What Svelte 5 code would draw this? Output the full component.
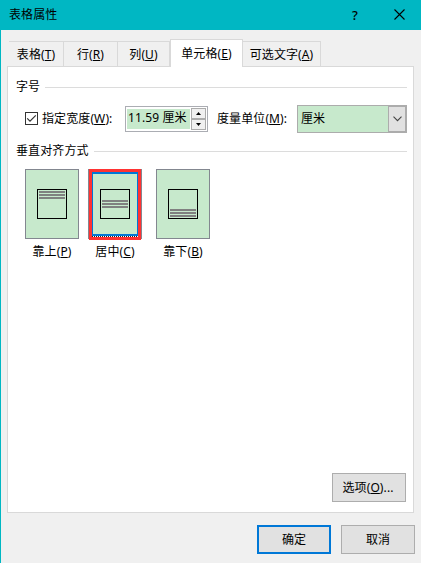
<script>
  const tabs = [
    { label: '表格', key: 'T', width: 55 },
    { label: '行', key: 'R', width: 54 },
    { label: '列', key: 'U', width: 52 },
    { label: '单元格', key: 'E', width: 73 },
    { label: '可选文字', key: 'A', width: 78 }
  ]
  const aligns = [
    { label: '靠上', key: 'P', y: 2 },
    { label: '居中', key: 'C', y: 11 },
    { label: '靠下', key: 'B', y: 20 }
  ]

  let activeTab = 'E'
  let align = 'C'
  let useWidth = true
  let width = 11.59

  function step(d) {
    width = Math.max(0, Math.round((width + d) * 100) / 100)
  }
</script>

<div class="dialog">
  <header class="titlebar">
    <span class="title">表格属性</span>
    <button class="help" aria-label="帮助">?</button>
    <button class="close" aria-label="关闭">
      <svg width="11" height="11" viewBox="0 0 11 11" fill="none" stroke="#000" stroke-width="1.1">
        <path d="M.5 .5L10.5 10.5M10.5 .5L.5 10.5" />
      </svg>
    </button>
  </header>

  <nav class="tabs">
    {#each tabs as tab}
      <button
        class="tab"
        class:active={tab.key === activeTab}
        style="width: {tab.width}px"
        on:click={() => (activeTab = tab.key)}
      >{tab.label}(<u>{tab.key}</u>)</button>
    {/each}
  </nav>

  <section class="panel">
    <div class="group first">字号</div>
    <div class="size-row">
      <button class="check" aria-label="指定宽度" on:click={() => (useWidth = !useWidth)}>
        {#if useWidth}
          <svg width="11" height="11" viewBox="0 0 11 11" fill="none" stroke="#333" stroke-width="1.2">
            <path d="M1.2 5.4L4 8.2L9.8 2.4" />
          </svg>
        {/if}
      </button>
      <span class="width-label">指定宽度(<u>W</u>):</span>
      <div class="spinner">
        <span class="value">{width} 厘米</span>
        <div class="steps">
          <button aria-label="增加" on:click={() => step(0.1)}>
            <svg width="5" height="3" viewBox="0 0 5 3"><path d="M0 3L2.5 0L5 3Z" /></svg>
          </button>
          <button aria-label="减少" on:click={() => step(-0.1)}>
            <svg width="5" height="3" viewBox="0 0 5 3"><path d="M0 0L2.5 3L5 0Z" /></svg>
          </button>
        </div>
      </div>
      <span class="unit-label">度量单位(<u>M</u>):</span>
      <div class="combo">
        <span>厘米</span>
        <button aria-label="展开">
          <svg width="9" height="6" viewBox="0 0 9 6" fill="none" stroke="#444" stroke-width="1.1">
            <path d="M.5 .7L4.5 4.7L8.5 .7" />
          </svg>
        </button>
      </div>
    </div>

    <div class="group">垂直对齐方式</div>
    <div class="aligns">
      {#each aligns as a}
        <div class="align">
          <button class="tile" class:selected={a.key === align} aria-label={a.label} on:click={() => (align = a.key)}>
            <svg width="30" height="30" viewBox="0 0 30 30" shape-rendering="crispEdges">
              <rect x=".5" y=".5" width="29" height="29" fill="none" stroke="#000" />
              <path d="M2 {a.y}h26v2h-26zM2 {a.y + 3}h26v2h-26zM2 {a.y + 6}h26v2h-26z" fill="#808080" />
            </svg>
          </button>
          <span>{a.label}(<u>{a.key}</u>)</span>
        </div>
      {/each}
    </div>

    <button class="btn options"><span>选项(<u>O</u>)...</span></button>
  </section>

  <footer class="actions">
    <button class="btn primary">确定</button>
    <button class="btn">取消</button>
  </footer>
</div>

<style>
  :global(body) {
    margin: 0;
    overflow: hidden;
  }

  .dialog {
    box-sizing: border-box;
    width: 421px;
    height: 563px;
    background: #f0f0f0;
    border-left: 1px solid #00b7c3;
    font: 12px/16px "Noto Sans", "Noto Sans CJK SC", sans-serif;
    letter-spacing: 0.1px;
    color: #000;
    display: flex;
    flex-direction: column;
  }
  .dialog * { box-sizing: border-box; }

  button {
    font: inherit;
    letter-spacing: inherit;
    color: inherit;
    padding: 0;
    margin: 0;
    border: 0;
    background: none;
    display: flex;
    align-items: center;
    justify-content: center;
    white-space: nowrap;
  }

  u {
    text-underline-offset: 1px;
    text-decoration-thickness: 1px;
    text-decoration-skip-ink: none;
  }

  .titlebar {
    height: 30px;
    margin-left: -1px;
    padding-left: 9px;
    background: #00b7c3;
    display: flex;
    align-items: center;
    flex-shrink: 0;
  }
  .title { flex: 1; }
  .help {
    width: 20px;
    font-size: 13px;
    font-weight: 500;
    margin-right: 29px;
  }
  .close {
    width: 11px;
    margin: -1px 16px 0 0;
  }

  .tabs {
    display: flex;
    align-items: flex-end;
    height: 37px;
    margin-left: 8px;
    margin-bottom: -1px;
    flex-shrink: 0;
    position: relative;
  }
  .tab {
    height: 26px;
    border-top: 1px solid #d9d9d9;
    border-right: 1px solid #d9d9d9;
  }
  .tab.active {
    height: 28px;
    background: #fff;
    border-left: 1px solid #d9d9d9;
  }

  .panel {
    width: 407px;
    height: 447px;
    margin-left: 6px;
    padding: 12px 6px 0 8px;
    background: #fff;
    border: 1px solid #d9d9d9;
    display: flex;
    flex-direction: column;
    flex-shrink: 0;
  }

  .group {
    display: flex;
    align-items: center;
    gap: 5px;
    height: 16px;
  }
  .group::after {
    content: '';
    flex: 1;
    height: 1px;
    background: #dcdcdc;
  }

  .size-row {
    display: flex;
    align-items: center;
    height: 28px;
    margin: 10px 0;
    padding-left: 9px;
  }
  .check {
    width: 13px;
    height: 13px;
    margin-top: -1px;
    border: 1px solid #333;
    background: #fff;
  }
  .width-label {
    width: 83px;
    margin-left: 4px;
    white-space: nowrap;
  }
  .spinner {
    display: flex;
    width: 83px;
    height: 26px;
    padding: 1px;
    border: 1px solid #abadb3;
  }
  .value {
    flex: 1;
    height: 20px;
    margin: 1px 1px 0 0;
    padding-left: 1px;
    line-height: 18px;
    background: #c7e9cc;
    white-space: nowrap;
  }
  .steps {
    width: 15px;
    display: flex;
    flex-direction: column;
  }
  .steps button {
    flex: 1;
    border: 1px solid #acacac;
    background: #f0f0f0;
  }
  .unit-label {
    width: 89px;
    padding-left: 9px;
    white-space: nowrap;
  }
  .combo {
    display: flex;
    align-items: center;
    justify-content: space-between;
    width: 110px;
    height: 28px;
    padding-left: 3px;
    border: 1px solid #acacac;
    background: #c7e9cc;
  }
  .combo button {
    width: 18px;
    height: 26px;
    border: 1px solid #acacac;
    background: #e1e1e1;
  }

  .aligns {
    display: flex;
    padding-left: 9px;
    margin-top: 10px;
  }
  .align {
    width: 54px;
    display: flex;
    flex-direction: column;
    align-items: center;
    gap: 5px;
    white-space: nowrap;
  }
  .align:nth-child(2) { margin: 0 14px 0 9px; }
  .tile {
    position: relative;
    width: 54px;
    height: 70px;
    border: 1px solid #838790;
    background: #c7e9cc;
  }
  .tile.selected::before {
    content: '';
    position: absolute;
    inset: -1px 0 -2px;
    border: 3px solid #ff3333;
    background: repeating-linear-gradient(90deg, #222 0 1px, #fff 1px 2px) 0 100% / 100% 1px no-repeat;
  }
  .tile.selected::after {
    content: '';
    position: absolute;
    inset: 2px 3px;
    border: solid #0078d7;
    border-width: 2px 1px;
  }

  .btn {
    width: 74px;
    height: 29px;
    border: 1px solid #adadad;
    background: #e1e1e1;
  }
  .primary { border: 2px solid #0078d7; }
  .options {
    margin-top: auto;
    margin-bottom: 10px;
    align-self: flex-end;
    margin-right: 1px;
    padding-right: 2px;
  }

  .actions {
    display: flex;
    justify-content: flex-end;
    gap: 10px;
    padding: 12px 6px 0 0;
  }
</style>
